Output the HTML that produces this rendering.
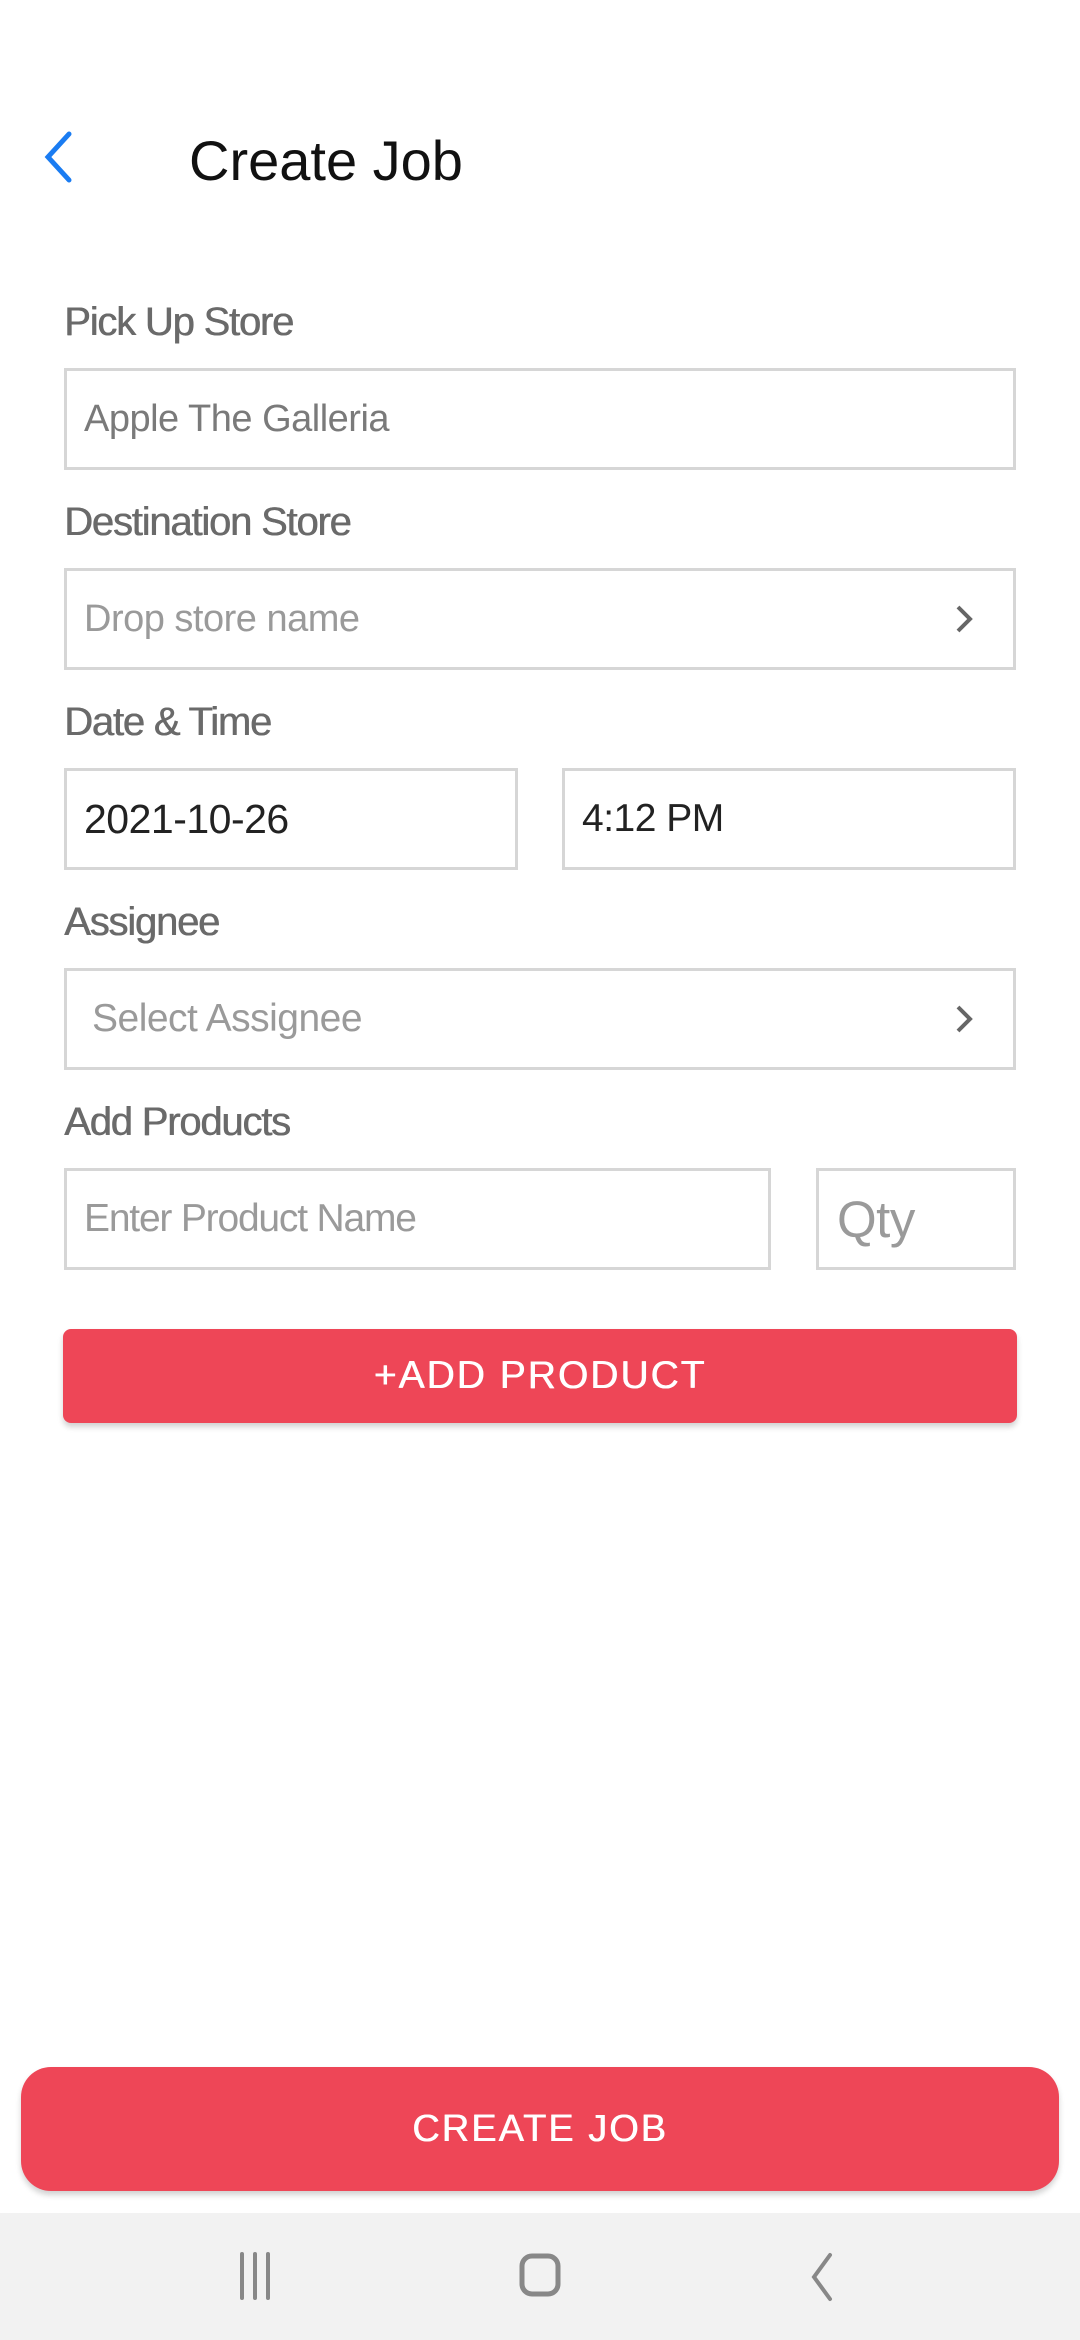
<!DOCTYPE html>
<html><head><meta charset="utf-8"><style>
*{margin:0;padding:0;box-sizing:border-box}
body{width:1080px;height:2340px;background:#fff;position:relative;overflow:hidden;font-family:"Liberation Sans",sans-serif}
.a{position:absolute}
.lbl{position:absolute;left:64px;font-size:40px;color:#6a6a6a;letter-spacing:-1.2px;line-height:40px;text-shadow:0.6px 0 #6a6a6a}
.box{position:absolute;border:3px solid #d6d6d6;background:#fff;font-size:38px;color:#7a7a7a;letter-spacing:-0.5px;display:flex;align-items:center;padding-left:17px}
.btn{position:absolute;background:#ee4657;color:#fff;display:flex;align-items:center;justify-content:center;letter-spacing:2px;box-shadow:0 4px 6px rgba(0,0,0,.18);text-shadow:0.6px 0 #fff}
</style></head><body>
<svg class="a" style="left:38px;top:130px" width="40" height="54" viewBox="0 0 40 54"><path d="M31 4 L10 27 L31 50" fill="none" stroke="#1a7cf2" stroke-width="5" stroke-linecap="round"/></svg>
<div class="a" style="left:189px;top:128px;font-size:56px;color:#111;line-height:66px">Create Job</div>

<div class="lbl" style="top:302px">Pick Up Store</div>
<div class="box" style="left:64px;top:368px;width:952px;height:102px">Apple The Galleria</div>

<div class="lbl" style="top:502px">Destination Store</div>
<div class="box" style="left:64px;top:568px;width:952px;height:102px;color:#9a9a9a">Drop store name</div>
<svg class="a" style="left:952px;top:603px" width="24" height="32" viewBox="0 0 24 32"><path d="M6 4 L18 16 L6 28" fill="none" stroke="#666" stroke-width="4"/></svg>

<div class="lbl" style="top:702px">Date &amp; Time</div>
<div class="box" style="left:64px;top:768px;width:454px;height:102px;color:#222;font-size:41px">2021-10-26</div>
<div class="box" style="left:562px;top:768px;width:454px;height:102px;color:#222;font-size:39px">4:12 PM</div>

<div class="lbl" style="top:902px">Assignee</div>
<div class="box" style="left:64px;top:968px;width:952px;height:102px;color:#9a9a9a;padding-left:25px;font-size:39px">Select Assignee</div>
<svg class="a" style="left:952px;top:1003px" width="24" height="32" viewBox="0 0 24 32"><path d="M6 4 L18 16 L6 28" fill="none" stroke="#666" stroke-width="4"/></svg>

<div class="lbl" style="top:1102px">Add Products</div>
<div class="box" style="left:64px;top:1168px;width:707px;height:102px;color:#9a9a9a;letter-spacing:-1.2px;font-size:39px">Enter Product Name</div>
<div class="box" style="left:816px;top:1168px;width:200px;height:102px;color:#9a9a9a;font-size:51px;padding-left:18px">Qty</div>

<div class="btn" style="left:63px;top:1329px;width:954px;height:94px;border-radius:8px;font-size:39px">+ADD PRODUCT</div>

<div class="btn" style="left:21px;top:2067px;width:1038px;height:124px;border-radius:30px;font-size:38px">CREATE JOB</div>

<div class="a" style="left:0;top:2213px;width:1080px;height:127px;background:#f2f2f2"></div>
<svg class="a" style="left:236px;top:2250px" width="48" height="52" viewBox="0 0 48 52"><path d="M6 4V48M19 4V48M32 4V48" stroke="#888" stroke-width="4" stroke-linecap="round"/></svg>
<svg class="a" style="left:518px;top:2250px" width="44" height="52" viewBox="0 0 44 52"><rect x="4" y="6" width="36" height="38" rx="10" fill="none" stroke="#888" stroke-width="5"/></svg>
<svg class="a" style="left:806px;top:2250px" width="30" height="52" viewBox="0 0 30 52"><path d="M24 5 L8 27 L24 49" fill="none" stroke="#888" stroke-width="4" stroke-linecap="round"/></svg>
</body></html>
